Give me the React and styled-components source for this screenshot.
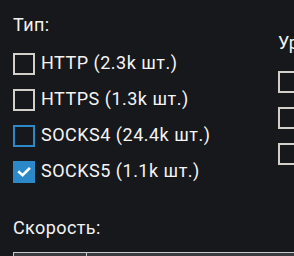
import React from "react";
import styled, { createGlobalStyle } from "styled-components";

const Global = createGlobalStyle`
  html, body {
    margin: 0;
    padding: 0;
    background: #17181c;
    overflow: hidden;
  }
  body {
    font-family: Roboto, "Noto Sans", sans-serif;
    color: #f0f0f0;
  }
`;

const Page = styled.div`
  padding: 15px 0 0 13px;
  width: 281px;
`;

const FilterRow = styled.div`
  display: flex;
  align-items: center;
`;

const Group = styled.div`
  display: flex;
  flex-direction: column;
  flex: ${(p) => (p.$width ? `0 0 ${p.$width}px` : "1 1 auto")};
  min-width: 0;
  white-space: nowrap;
  overflow: hidden;
`;

const Title = styled.div`
  font-size: 18px;
  line-height: 20px;
  letter-spacing: 0.4px;
  font-weight: 400;
  color: #f2f2f2;
  margin-bottom: ${(p) => p.$gap ?? 18}px;
`;

const List = styled.div`
  display: flex;
  flex-direction: column;
  gap: 14px;
`;

const Row = styled.label`
  display: flex;
  align-items: flex-start;
  gap: 6px;
  height: 22px;
`;

const Box = styled.span`
  box-sizing: border-box;
  flex: 0 0 22px;
  width: 22px;
  height: 22px;
  border: 2px solid
    ${(p) => (p.$checked || p.$focus ? "#2b88c9" : "#d3cfca")};
  background: ${(p) => (p.$checked ? "#2b88c9" : "transparent")};
  display: flex;
  align-items: center;
  justify-content: center;
`;

const Label = styled.span`
  font-size: 18px;
  line-height: 20px;
  font-weight: 400;
  letter-spacing: 0.5px;
  color: #f4f4f4;
`;

const Speed = styled.div`
  margin-top: 35px;
`;

const Inputs = styled.div`
  display: flex;
  width: 300px;
`;

const Field = styled.div`
  box-sizing: border-box;
  height: 20px;
  background: #3a3b40;
  border-top: 1px solid #c9c9c9;
  border-left: 1px solid #c9c9c9;
  flex: ${(p) => (p.$width ? `0 0 ${p.$width}px` : "1 1 auto")};
`;

const Check = () => (
  <svg width="18" height="18" viewBox="0 0 18 18" aria-hidden="true">
    <path
      d="M4.2 9.2 L7.6 12.2 L14 5.8"
      fill="none"
      stroke="#ffffff"
      strokeWidth="2.6"
      strokeLinecap="square"
    />
  </svg>
);

const Option = ({ label, checked, focus }) => (
  <Row>
    <Box $checked={checked} $focus={focus}>
      {checked && <Check />}
    </Box>
    {label && <Label>{label}</Label>}
  </Row>
);

const types = [
  { label: "HTTP (2.3k шт.)" },
  { label: "HTTPS (1.3k шт.)" },
  { label: "SOCKS4 (24.4k шт.)", focus: true },
  { label: "SOCKS5 (1.1k шт.)", checked: true },
];

const levels = [
  { label: "Прозрачный" },
  { label: "Анонимный" },
  { label: "Элитный" },
];

export default function App() {
  return (
    <>
      <Global />
      <Page>
        <FilterRow>
          <Group $width={265}>
            <Title>Тип:</Title>
            <List>
              {types.map((t) => (
                <Option key={t.label} {...t} />
              ))}
            </List>
          </Group>
          <Group>
            <Title>Уровень анонимности:</Title>
            <List>
              {levels.map((t) => (
                <Option key={t.label} {...t} />
              ))}
            </List>
          </Group>
        </FilterRow>
        <Speed>
          <Title $gap={14}>Скорость:</Title>
          <Inputs>
            <Field $width={73} />
            <Field />
          </Inputs>
        </Speed>
      </Page>
    </>
  );
}
